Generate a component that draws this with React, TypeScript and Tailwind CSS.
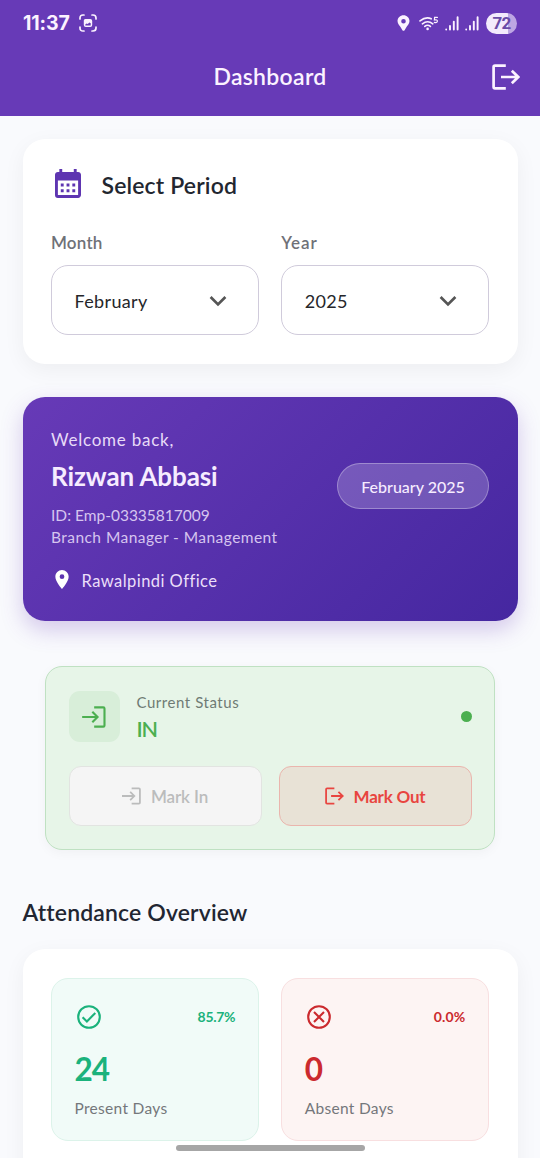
import type { ReactNode } from "react";

type IconProps = { className?: string; weight?: number };

function LogoutIcon({ className, weight = 2.7 }: IconProps) {
  return (
    <svg viewBox="0 0 28 26" className={className} fill="none" stroke="currentColor" strokeWidth={weight}>
      <path d="M13.8 1.6H3Q1.6 1.6 1.6 3V23Q1.6 24.4 3 24.4H13.8" />
      <path d="M9 13H26.2M19.8 6.8L26.2 13L19.8 19.2" />
    </svg>
  );
}

function LoginIcon({ className, weight = 2.7 }: IconProps) {
  return (
    <svg viewBox="0 0 28 26" className={className} fill="none" stroke="currentColor" strokeWidth={weight}>
      <path d="M14.2 1.6H25Q26.4 1.6 26.4 3V23Q26.4 24.4 25 24.4H14.2" />
      <path d="M0 13H18M12 6.8L18.2 13L12 19.2" />
    </svg>
  );
}

function PinIcon({ className }: IconProps) {
  return (
    <svg viewBox="5 2 14 20" className={className} fill="currentColor">
      <path d="M12 2C8.13 2 5 5.13 5 9c0 5.25 7 13 7 13s7-7.75 7-13c0-3.87-3.13-7-7-7zm0 9.5a2.5 2.5 0 0 1 0-5 2.5 2.5 0 0 1 0 5z" />
    </svg>
  );
}

function StatusPinIcon() {
  return (
    <svg viewBox="0 0 12 16" className="mr-[9px] h-4 w-[13px]" fill="currentColor">
      <path fillRule="evenodd" d="M6 .2C2.7.2 0 2.8 0 6.1C0 9.2 2.3 10.9 3.6 13L4.9 15.3Q6 16.4 7.1 15.3L8.4 13C9.7 10.9 12 9.2 12 6.1C12 2.8 9.3.2 6 .2ZM6 8.6A2.3 2.3 0 1 1 6 4A2.3 2.3 0 0 1 6 8.6Z" />
    </svg>
  );
}

function CalendarIcon({ className }: IconProps) {
  return (
    <svg viewBox="3 2 18 20" className={className} fill="currentColor">
      <path d="M19 4h-1V2h-2v2H8V2H6v2H5c-1.11 0-2 .9-2 2v14a2 2 0 0 0 2 2h14c1.1 0 2-.9 2-2V6c0-1.1-.9-2-2-2zm0 16H5V10h14v10zM9 14H7v-2h2v2zm4 0h-2v-2h2v2zm4 0h-2v-2h2v2zm-8 4H7v-2h2v2zm4 0h-2v-2h2v2zm4 0h-2v-2h2v2z" />
    </svg>
  );
}

function ChevronIcon() {
  return (
    <svg viewBox="0 0 18 12" className="mt-0.5 h-3 w-[18px]" fill="none" stroke="#555" strokeWidth="2.7">
      <path d="M1.6 2L9 9.4L16.4 2" />
    </svg>
  );
}

function SignalIcon() {
  return (
    <svg viewBox="0 0 14 15" className="h-[15px] w-3.5" fill="none" stroke="currentColor" strokeWidth="1.9" strokeLinecap="round">
      <path d="M1.2 13.4V13.6M5 10V13.6M8.8 5.6V13.6M12.6 1.2V13.6" />
    </svg>
  );
}

function WifiIcon() {
  return (
    <svg viewBox="0 0 20 15" className="h-[15px] w-5" fill="none" stroke="currentColor" strokeWidth="1.6" strokeLinecap="round">
      <path d="M1 4.9Q7 .2 12.2 2.8M3.4 7.8Q8.6 3.8 13.8 7.8M5.8 10.4Q8.6 8.2 11.4 10.4" />
      <circle cx="8.6" cy="12.9" r="1.3" fill="currentColor" stroke="none" />
      <path d="M18.4 1.4H15.6L15.4 4Q18.6 3.4 18.4 5.4Q18 7 15.3 6.4" strokeWidth="1.2" />
    </svg>
  );
}

function CaptureIcon() {
  return (
    <svg viewBox="0 0 18 18" className="h-[18px] w-[18px]" fill="none" stroke="currentColor" strokeWidth="1.7" strokeLinecap="round">
      <path d="M1 5V4Q1 1 4 1H5M13 1H14Q17 1 17 4V5M17 13V14Q17 17 14 17H13M5 17H4Q1 17 1 14V13" />
      <path fillRule="evenodd" fill="currentColor" stroke="none" d="M6.3 5H11.2Q13.2 5 13.2 7V11Q13.2 13 11.2 13H6.8Q4.8 13 4.8 11V6.5Q4.8 5 6.3 5ZM6.3 11.4H11.7V9.2L10.4 8.4L8.7 10L7.6 9.4L6.3 10.6Z" />
    </svg>
  );
}

function StatusBar() {
  return (
    <div className="flex h-[46px] items-center justify-between pl-[23px] pr-[23px]">
      <div className="flex items-center gap-2">
        <span className="mt-0.5 w-[48px] font-[Inter,sans-serif] text-[19.5px] font-bold tracking-[-0.1px]">11:37</span>
        <CaptureIcon />
      </div>
      <div className="flex items-center">
        <StatusPinIcon />
        <WifiIcon />
        <div className="ml-1.5 mr-[7px] flex gap-1.5">
          <SignalIcon />
          <SignalIcon />
        </div>
        <span className="flex h-[21px] w-[31px] items-center justify-center rounded-full bg-linear-to-r from-[#f3eafc] from-72% to-[#bda6e3] to-72% font-[Roboto,sans-serif] text-[17px] font-bold leading-none tracking-[-0.7px] text-[#6a4ba6]">
          72
        </span>
      </div>
    </div>
  );
}

function Select({ label, labelClass, value }: { label: string; labelClass: string; value: string }) {
  return (
    <div className="flex-1">
      <div className={`text-[17px] font-semibold leading-6 text-[#6f7178] ${labelClass}`}>{label}</div>
      <div className="mt-[10px] flex h-[70px] items-center justify-between rounded-[17px] border-[1.5px] border-[#d0cbdb] pl-[22.5px] pr-[31px]">
        <span className="mt-px text-[18px] leading-6 tracking-[0.35px] text-[#25262a]">{value}</span>
        <ChevronIcon />
      </div>
    </div>
  );
}

function Stat({ tone, icon, percent, percentClass, value, label }: {
  tone: string; icon: ReactNode; percent: string; percentClass: string; value: string; label: string;
}) {
  return (
    <div className={`h-[163px] flex-1 rounded-[17px] border-[1.5px] px-[22.5px] pt-[25px] ${tone}`}>
      <div className="flex h-[26px] items-center justify-between pl-[2px]">
        <svg viewBox="0 0 24 24" className="h-6 w-6" fill="none" stroke="currentColor" strokeWidth="2.1">
          <circle cx="12" cy="12" r="10.8" />
          {icon}
        </svg>
        <span className={`text-[14px] font-bold leading-none ${percentClass}`}>{percent}</span>
      </div>
      <div className="mt-5 text-[31.5px] font-bold leading-[38px] tracking-[-0.9px]">{value}</div>
      <div className="mt-[10px] text-[15.5px] leading-5 tracking-[0.3px] text-[#74777b]">{label}</div>
    </div>
  );
}

export default function App() {
  return (
    <div className="relative h-[1158px] w-[540px] overflow-hidden bg-[#f9fafd] font-[Lato,sans-serif]">
      <header className="h-[116px] bg-[#673ab7] text-[#fbf2ff]">
        <StatusBar />
        <div className="grid h-[61px] grid-cols-[1fr_auto_1fr] items-center px-5">
          <h1 className="col-start-2 text-[23px] font-semibold leading-none tracking-[0.3px]">Dashboard</h1>
          <LogoutIcon className="h-[26px] w-7 justify-self-end" />
        </div>
      </header>

      <main className="px-[22.5px] pt-[22.5px]">
        <section className="h-[225px] rounded-[22px] bg-white px-[28.5px] pt-[28.5px] shadow-[0_6px_22px_rgba(0,0,0,0.05)]">
          <div className="flex h-[34px] items-center">
            <CalendarIcon className="mb-0.5 ml-[3.5px] h-[29px] w-[26px] text-[#5e35b1]" />
            <h2 className="ml-[21px] mt-0.5 text-[23px] font-semibold leading-none tracking-[0.15px] text-[#222630]">Select Period</h2>
          </div>
          <div className="mt-[30px] flex gap-[22.5px]">
            <Select label="Month" labelClass="tracking-[0.2px]" value="February" />
            <Select label="Year" labelClass="tracking-[0.9px]" value="2025" />
          </div>
        </section>

        <section className="mt-[33.5px] flex h-[223.5px] items-start justify-between rounded-[22px] bg-[linear-gradient(135deg,#673ab7,#4527a0)] pl-[28.5px] pr-[28.5px] pt-[29.5px] text-[#f6ecff] shadow-[0_9px_22px_rgba(103,58,183,0.26)]">
          <div>
            <p className="text-[17px] leading-[26px] tracking-[0.77px] text-[#e8dbf8]">Welcome back,</p>
            <p className="text-[26px] font-bold leading-[46px] tracking-[-0.1px]">Rizwan Abbasi</p>
            <p className="mt-[5px] text-[15.5px] leading-[22px] text-[#d6c5ef]">ID: Emp-03335817009</p>
            <p className="text-[15.5px] leading-[22px] tracking-[0.45px] text-[#d6c5ef]">Branch Manager - Management</p>
            <div className="mt-5 flex h-[26px] items-center">
              <PinIcon className="mb-[2px] ml-[3.5px] h-[19px] w-3.5 text-white" />
              <span className="ml-[13px] mt-0.5 text-[16.5px] leading-none tracking-[0.45px] text-[#ebdff9]">Rawalpindi Office</span>
            </div>
          </div>
          <span className="mt-[36px] flex h-[46px] w-[152px] items-center justify-center rounded-full border-[1.5px] border-white/30 bg-white/20 pt-0.5 text-[16px] font-medium leading-none">
            February 2025
          </span>
        </section>

        <section className="mx-[22.5px] mt-[45px] h-[184px] rounded-[17px] border-[1.5px] border-[#bfe1c2] bg-[#e7f5e8] px-[22.5px] pt-[24.5px] shadow-[0_3px_12px_rgba(0,0,0,0.04)]">
          <div className="flex h-[51px] items-center">
            <div className="flex h-[51px] w-[51px] items-center justify-center rounded-[11px] bg-[#d8eed9] text-[#4caf50]">
              <LoginIcon className="h-[22px] w-6" weight={2.5} />
            </div>
            <div className="ml-[17px] flex-1">
              <p className="text-[15px] leading-6 tracking-[0.55px] text-[#6f7b74]">Current Status</p>
              <p className="text-[21.5px] font-semibold leading-[30px] tracking-[-1.2px] text-[#4caf50]">IN</p>
            </div>
            <span className="h-[11px] w-[11px] rounded-full bg-[#4caf50]" />
          </div>
          <div className="mt-6 flex gap-[17px]">
            <button className="flex h-[60px] flex-1 items-center justify-center gap-[10px] rounded-[12px] border-[1.5px] border-[#e2e4e1] bg-[#f5f5f5] text-[#bbbcbc]">
              <LoginIcon className="h-[18px] w-[19px]" weight={2.6} />
              <span className="mt-px text-[17px] font-semibold leading-none tracking-[-0.1px]">Mark In</span>
            </button>
            <button className="flex h-[60px] flex-1 items-center justify-center gap-[10px] rounded-[12px] border-[1.5px] border-[#eab5ad] bg-[#e8e2d6] text-[#e84540]">
              <LogoutIcon className="h-[18px] w-[19px]" weight={2.6} />
              <span className="mt-px text-[17px] font-bold leading-none tracking-[-0.2px]">Mark Out</span>
            </button>
          </div>
        </section>

        <h2 className="mt-[47.5px] text-[23px] font-semibold leading-[30px] tracking-[0.15px] text-[#222632]">Attendance Overview</h2>

        <section className="mt-[22px] flex h-[260px] gap-[22.5px] rounded-[22px] bg-white p-[28.5px] shadow-[0_6px_22px_rgba(0,0,0,0.05)]">
          <Stat
            tone="border-[#dcf3ea] bg-[#f1fbf8] text-[#1bb27c]"
            icon={<path d="M5.6 12.2L9.9 16.4L18.3 8" />}
            percent="85.7%"
            percentClass="tracking-[-0.3px]"
            value="24"
            label="Present Days"
          />
          <Stat
            tone="border-[#f8dfe0] bg-[#fdf4f3] text-[#cb2a2e]"
            icon={<path d="M7 7L17 17M17 7L7 17" />}
            percent="0.0%"
            percentClass="tracking-[0.2px]"
            value="0"
            label="Absent Days"
          />
        </section>
      </main>

      <div className="absolute bottom-[7px] left-[175.5px] h-1.5 w-[189px] rounded-full bg-[#a6a6a6]" />
    </div>
  );
}
